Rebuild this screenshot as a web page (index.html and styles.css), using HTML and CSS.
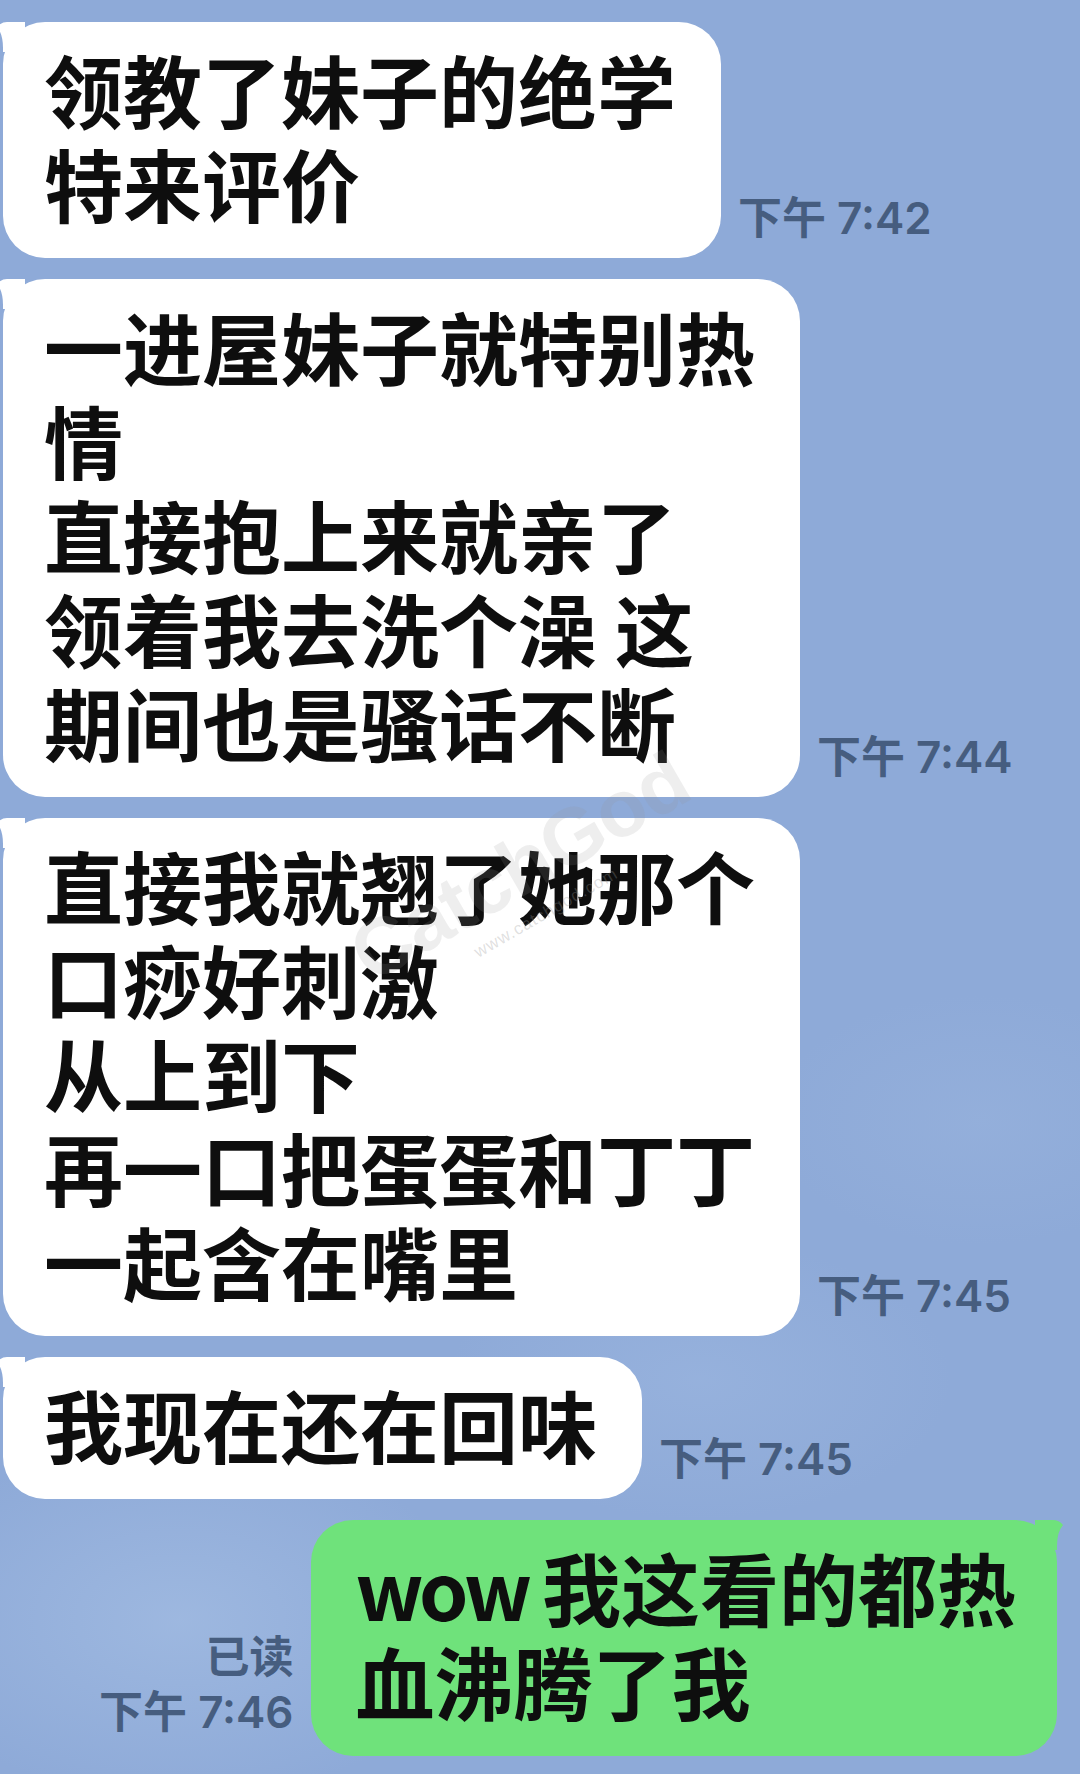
FILE: index.html
```html
<!DOCTYPE html>
<html lang="zh-CN">
<head>
<meta charset="utf-8">
<title>聊天记录</title>
<link rel="stylesheet" href="styles.css">
</head>
<body>
<div class="chat">
  <div class="row row-in">
    <div class="bubble bubble-in">领教了妹子的绝学<br>特来评价</div>
    <div class="time">下午 7:42</div>
  </div>
  <div class="row row-in">
    <div class="bubble bubble-in">一进屋妹子就特别热<br>情<br>直接抱上来就亲了<br>领着我去洗个澡 这<br>期间也是骚话不断</div>
    <div class="time">下午 7:44</div>
  </div>
  <div class="row row-in">
    <div class="bubble bubble-in">直接我就翘了她那个<br>口痧好刺激<br>从上到下<br>再一口把蛋蛋和丁丁<br>一起含在嘴里</div>
    <div class="time">下午 7:45</div>
  </div>
  <div class="row row-in">
    <div class="bubble bubble-in">我现在还在回味</div>
    <div class="time">下午 7:45</div>
  </div>
  <div class="row row-out">
    <div class="meta"><span>已读</span><span>下午 7:46</span></div>
    <div class="bubble bubble-out"><span class="latin">wow </span>我这看的都热<br>血沸腾了我</div>
  </div>
</div>
<div class="watermark">
  <span class="wm-logo">CatchGod</span>
  <span class="wm-url">www.catchgod.com</span>
</div>
</body>
</html>
```

FILE: styles.css
```css
html, body {
  margin: 0;
  padding: 0;
}

body {
  width: 1080px;
  height: 1774px;
  overflow: hidden;
  position: relative;
  font-family: "Noto Sans CJK SC", "Noto Sans", sans-serif;
  background-color: #8eaad8;
  background-image:
    radial-gradient(ellipse 420px 260px at 180px 1620px, rgba(170, 195, 230, 0.55), rgba(170, 195, 230, 0) 70%),
    radial-gradient(ellipse 360px 200px at 700px 1380px, rgba(160, 186, 226, 0.45), rgba(160, 186, 226, 0) 70%),
    radial-gradient(ellipse 300px 180px at 980px 1120px, rgba(158, 184, 224, 0.35), rgba(158, 184, 224, 0) 70%);
}

.chat {
  display: flex;
  flex-direction: column;
  gap: 21px;
  padding-top: 22px;
}

.row {
  display: flex;
  align-items: flex-end;
}

.row-in {
  gap: 17px;
  margin-left: 3px;
}

.row-out {
  justify-content: flex-end;
  gap: 17px;
  margin-right: 23px;
}

.bubble {
  position: relative;
  color: #0e0e0e;
  font-size: 79px;
  font-weight: 700;
  line-height: 94px;
  border-radius: 42px;
  white-space: nowrap;
}

.bubble-in {
  background: #ffffff;
  padding: 20px 45px 28px 41px;
}

.bubble-in::before {
  content: "";
  position: absolute;
  top: 0;
  left: -8px;
  width: 30px;
  height: 30px;
  background: #ffffff;
  clip-path: path("M30 0 H12 Q6 0 2 5 Q8 12 8 26 V30 H30 Z");
}

.bubble-out {
  background: #6fe27b;
  padding: 20px 41px 28px 45px;
}

.bubble-out::after {
  content: "";
  position: absolute;
  top: 0;
  right: -8px;
  width: 30px;
  height: 30px;
  background: #6fe27b;
  clip-path: path("M0 0 H18 Q24 0 28 5 Q22 12 22 26 V30 H0 Z");
}

.latin {
  letter-spacing: -4px;
}

.time {
  font-family: "Inter", "Noto Sans CJK SC", sans-serif;
  font-size: 44px;
  font-weight: 600;
  line-height: 44px;
  color: #465d7f;
  white-space: nowrap;
  margin-bottom: 18px;
}

.meta {
  display: flex;
  flex-direction: column;
  align-items: flex-end;
  font-family: "Inter", "Noto Sans CJK SC", sans-serif;
  font-size: 44px;
  font-weight: 600;
  line-height: 55px;
  color: #465d7f;
  white-space: nowrap;
  margin-bottom: 16px;
}

.watermark {
  position: absolute;
  left: 325px;
  top: 930px;
  width: 400px;
  transform: rotate(-30deg);
  transform-origin: 0 0;
  display: flex;
  flex-direction: column;
  align-items: center;
  pointer-events: none;
}

.wm-logo {
  font-family: "Liberation Sans", sans-serif;
  font-weight: 700;
  font-size: 80px;
  line-height: 86px;
  color: rgba(150, 150, 150, 0.16);
  letter-spacing: -1px;
}

.wm-url {
  font-family: "Liberation Sans", sans-serif;
  font-size: 17px;
  color: rgba(150, 150, 150, 0.3);
  letter-spacing: 1px;
}
```
